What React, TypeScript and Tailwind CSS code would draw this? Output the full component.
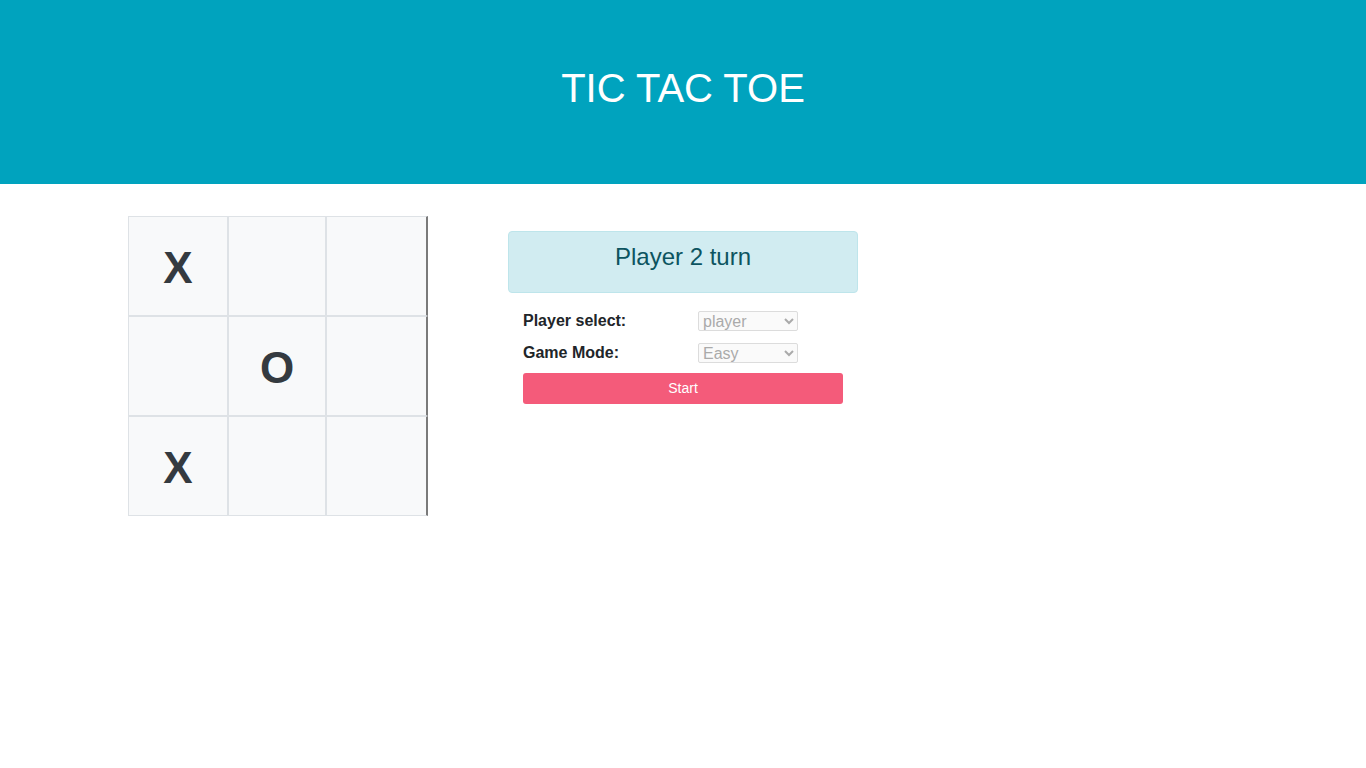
import React from 'react';

const board = ['X', '', '', '', 'O', '', 'X', '', ''];

// column widths; every cell carries its own 1px border, so inner lines are 2px
const colClass = [
  'w-[100px] border-[#dee2e6]',
  'w-[98px] border-[#dee2e6]',
  'w-[102px] border-[#dee2e6] border-r-2 border-r-[#7a7a7a]',
];

const App: React.FC = () => {
  return (
    <div className="min-h-screen bg-white font-['Liberation_Sans',Arial,sans-serif]">
      {/* Header */}
      <header className="h-[184px] bg-[#00a3be] flex items-center justify-center pb-[8px]">
        <h1 className="text-white text-[40px] leading-none">TIC TAC TOE</h1>
      </header>

      <main className="flex pt-[32px] pl-[128px]">
        {/* Board */}
        <div className="flex flex-wrap w-[300px]">
          {board.map((v, i) => (
            <div
              key={i}
              className={`${colClass[i % 3]} h-[100px] border bg-[#f8f9fa] flex items-center justify-center pt-[4px] text-[44px] font-bold text-[#343a40]`}
            >
              {v}
            </div>
          ))}
        </div>

        {/* Controls */}
        <div className="ml-[80px] mt-[15px] w-[350px]">
          <div className="h-[62px] bg-[#d1ecf1] border border-[#bee5eb] rounded-[4px] text-[#0c5460] text-[24px] text-center pt-[7px]">
            Player 2 turn
          </div>

          <div className="px-[15px] pt-[17px]">
            <div className="flex items-center h-[22px]">
              <label className="w-[175px] font-bold text-[16px] text-[#212529]">Player select:</label>
              <select disabled className="w-[100px] h-[20px] text-[16px] leading-none text-[#aaaaaa] bg-[#fafafa] border border-[#dcdcdc] rounded-[2px]">
                <option>player</option>
              </select>
            </div>
            <div className="flex items-center h-[22px] mt-[10px]">
              <label className="w-[175px] font-bold text-[16px] text-[#212529]">Game Mode:</label>
              <select disabled className="w-[100px] h-[20px] text-[16px] leading-none text-[#aaaaaa] bg-[#fafafa] border border-[#dcdcdc] rounded-[2px]">
                <option>Easy</option>
              </select>
            </div>
            <button className="mt-[9px] w-[320px] h-[31px] bg-[#f45b7a] text-white text-[14px] rounded-[3px]">
              Start
            </button>
          </div>
        </div>
      </main>
    </div>
  );
};

export default App;
